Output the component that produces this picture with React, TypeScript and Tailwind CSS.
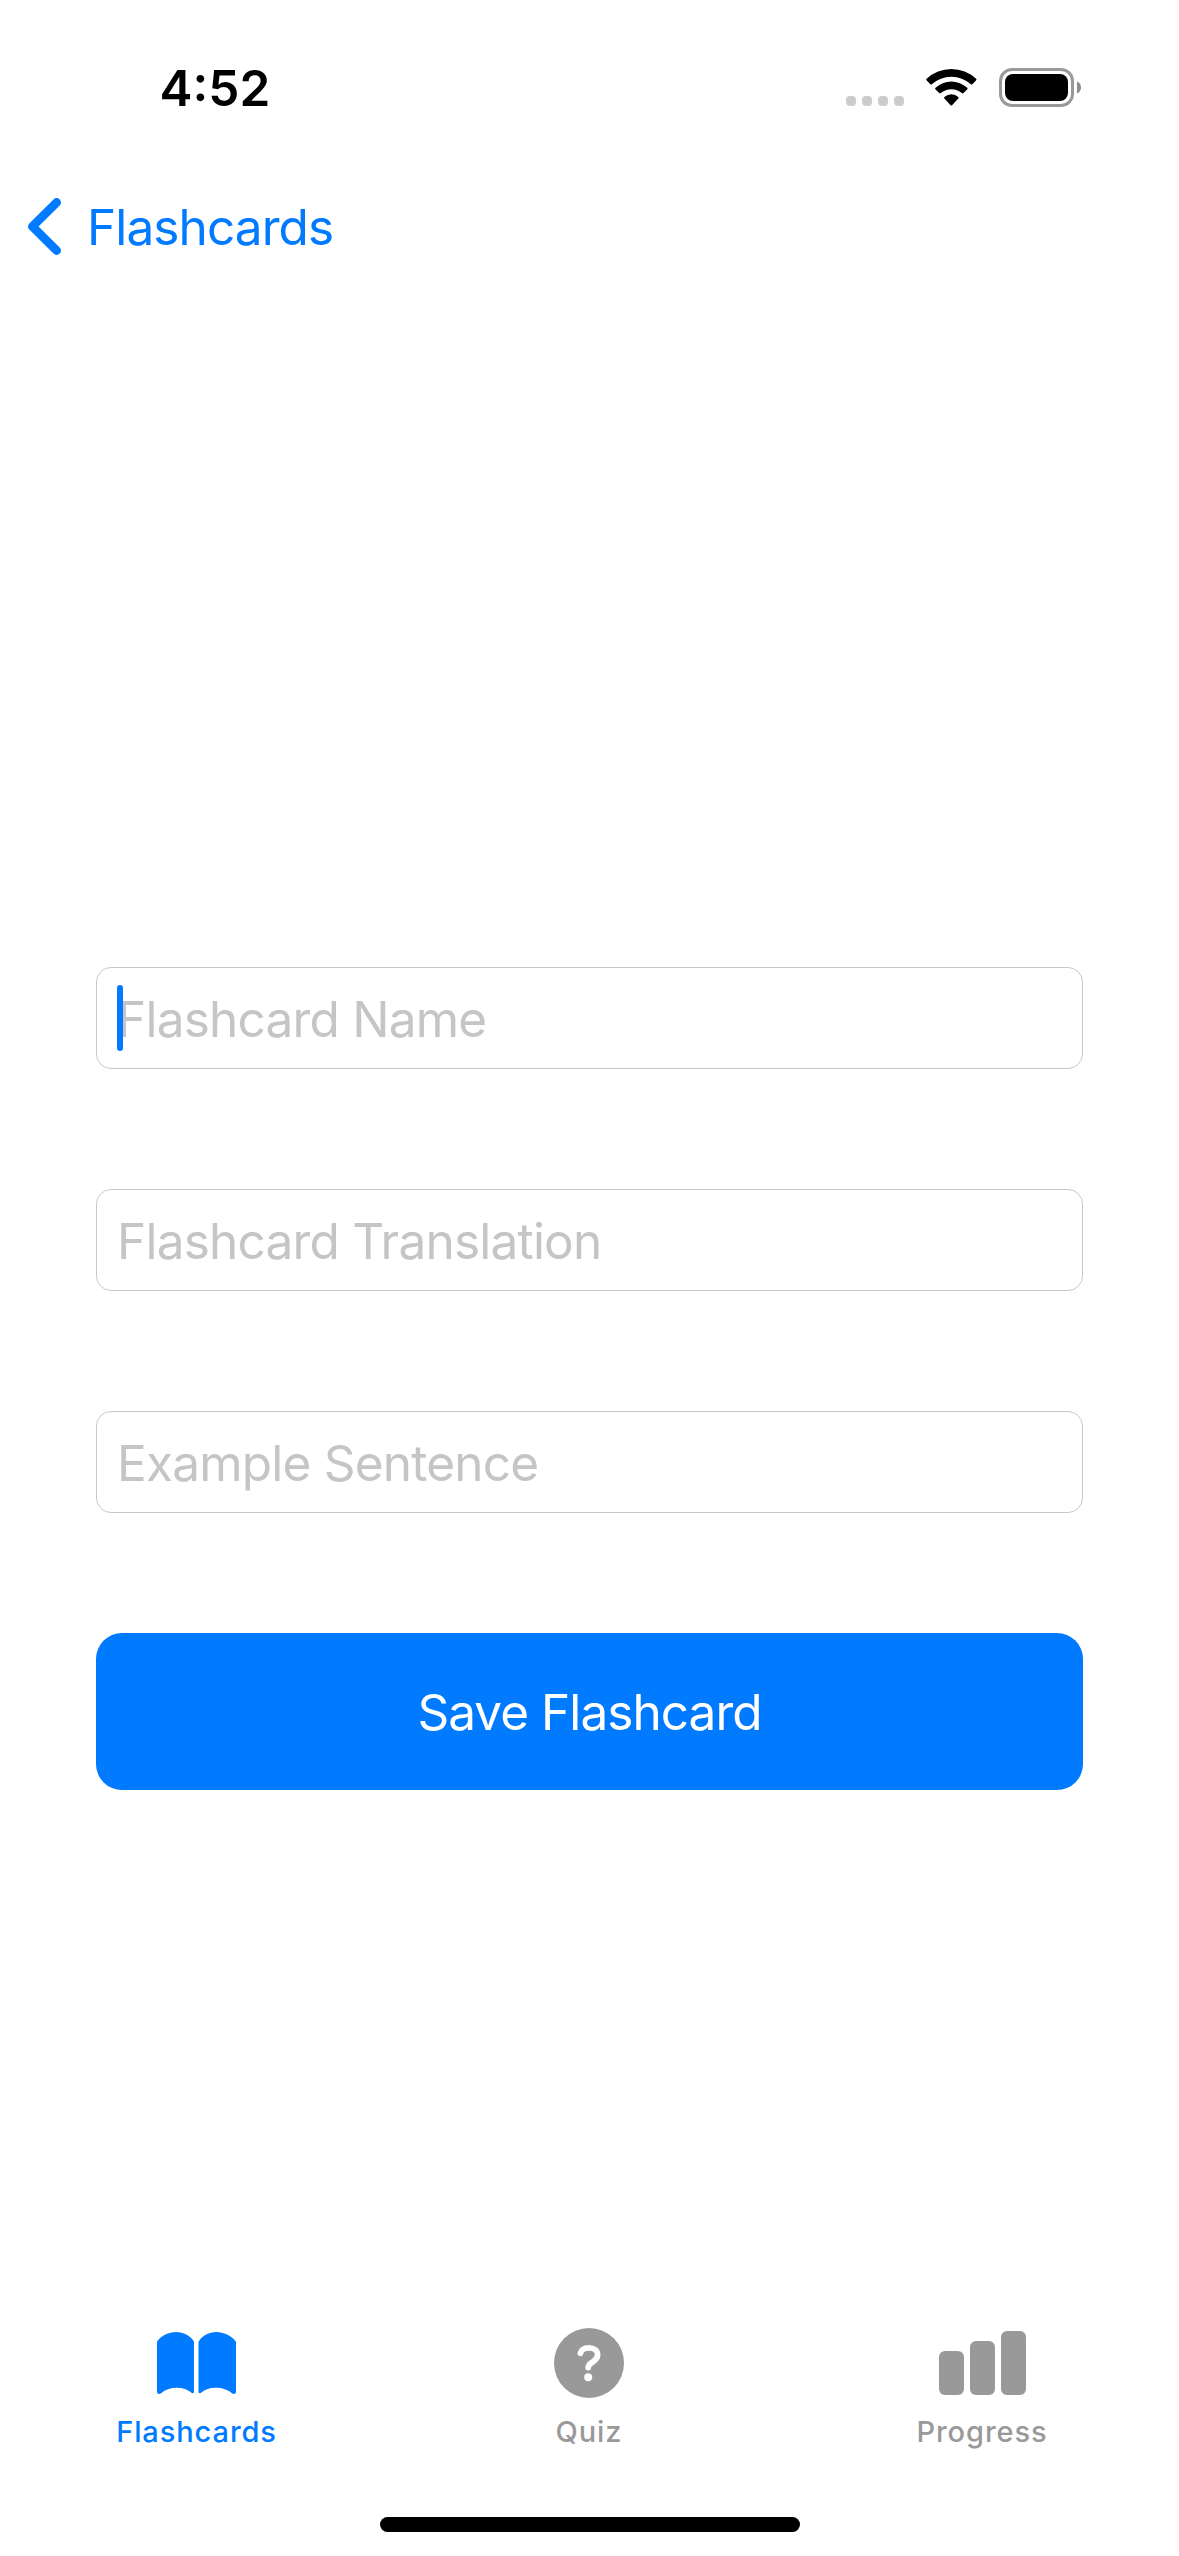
import type { ReactNode } from 'react'

function StatusBar() {
  return (
    <header className="flex h-[169px] items-start justify-between pl-[159.5px] pr-[98px] text-black">
      <span className="mt-[58px] text-[49.5px] leading-[60px] font-semibold">4:52</span>
      <div className="mt-[68px] flex h-[39px] items-start gap-[22px]">
        <div className="mt-7 flex gap-1.5">
          <span className="size-2.5 rounded-[4px] bg-[#cccccc]" />
          <span className="size-2.5 rounded-[4px] bg-[#cccccc]" />
          <span className="size-2.5 rounded-[4px] bg-[#cccccc]" />
          <span className="size-2.5 rounded-[4px] bg-[#cccccc]" />
        </div>
        <svg className="h-[39px] w-[51px]" viewBox="0 0 51 39" fill="currentColor">
          <path d="M.6 10.8A36 36 0 0 1 50.1 10.8Q50.9 11.5 50.2 12.3L46.4 16.2Q45.7 16.9 44.9 16.2A29.5 29.5 0 0 0 5.8 16.2Q5 16.9 4.3 16.2L.5 12.3Q-.2 11.5 .6 10.8Z" />
          <path d="M9.5 19.8A23.2 23.2 0 0 1 41.2 19.8Q42 20.5 41.3 21.3L37.5 25.1Q36.7 25.8 35.9 25.1A16.2 16.2 0 0 0 14.8 25.1Q14 25.8 13.2 25.1L9.4 21.3Q8.7 20.5 9.5 19.8Z" />
          <path d="M18.4 28.9A10.8 10.8 0 0 1 32.3 28.9Q33 29.6 32.3 30.4L26 37.2Q25.3 37.9 24.6 37.2L18.4 30.4Q17.7 29.6 18.4 28.9Z" />
        </svg>
        <svg className="h-[39px] w-[82px]" viewBox="0 0 82 39">
          <rect x="1.5" y="1.5" width="72" height="36" rx="11.5" fill="none" stroke="#999999" strokeWidth="3" />
          <rect x="6" y="6" width="63" height="27" rx="8" fill="#000" />
          <path d="M78 13.5Q82 15.4 82 19.5T78 25.5Z" fill="#8c8c8c" />
        </svg>
      </div>
    </header>
  )
}

function NavBar() {
  return (
    <nav className="flex h-[120px] items-start pl-7 text-[#007aff]">
      <svg className="mt-[29px] h-[57px] w-[33px]" viewBox="0 0 33 57" fill="none" stroke="currentColor" strokeWidth="8.8" strokeLinecap="round" strokeLinejoin="round">
        <path d="M28.6 4.5L4.4 28.5L28.6 52.5" />
      </svg>
      <span className="mt-7 ml-[26px] text-[49.5px] leading-[60px] tracking-[-0.9px]">Flashcards</span>
    </nav>
  )
}

function Field({ children, focused }: { children: ReactNode; focused?: boolean }) {
  return (
    <div className="relative h-[102px] rounded-[15px] border border-[#c8c8c9] pt-[21px] pl-5 text-[49.5px] leading-[60px] tracking-[-0.78px] text-[#c5c5c7]">
      {children}
      {focused && <span className="absolute top-[17px] left-5 h-[66px] w-1.5 rounded-full bg-[#007aff]" />}
    </div>
  )
}

function Tab({ icon, label, active }: { icon: ReactNode; label: string; active?: boolean }) {
  return (
    <div className={active ? 'flex flex-col items-center text-[#007aff]' : 'flex flex-col items-center pr-px text-[#999999]'}>
      {icon}
      <span className="mt-4 text-[29px] leading-[35px] font-medium tracking-[0.9px]">{label}</span>
    </div>
  )
}

const bookIcon = (
  <svg className="h-[70px] w-[79px]" viewBox="0 0 79 70" fill="currentColor">
    <path d="M0 14.5Q0 13.5 .8 12.7C4.5 7.5 11.5 4 19.2 4C26.5 4 33 7.5 36.4 12.7Q37 13.5 37 14.5V63.8Q37 66 34.8 64.9C31 61.5 25.5 59.7 19.7 59.7C13.5 59.7 8 61.7 4.4 64.9Q2.8 66.2 1.2 65.8Q0 65.3 0 63.8Z" />
    <path d="M41.5 14.5Q41.5 13.5 42.2 12.7C45.5 7.5 52 4 59.3 4C67 4 74 7.5 78.2 12.7Q79 13.5 79 14.5V63.8Q79 65.3 77.8 65.8Q76.2 66.2 74.6 64.9C71 61.7 65 59.7 58.8 59.7C53 59.7 47.5 61.5 43.7 64.9Q41.5 66 41.5 63.8Z" />
  </svg>
)

const quizIcon = (
  <svg className="size-[70px]" viewBox="0 0 70 70">
    <circle cx="35" cy="35" r="35" fill="currentColor" />
    <path d="M26.4 25.3C27.3 21.8 30.5 19.8 35 19.8C40 19.8 43.6 22.6 43.6 26.8C43.6 30.3 41.5 32.2 38.7 33.9C35.5 35.8 34.2 37.2 34.2 39.5" fill="none" stroke="#fff" strokeWidth="5.8" strokeLinecap="round" strokeLinejoin="round" />
    <circle cx="34.2" cy="49.3" r="4" fill="#fff" />
  </svg>
)

const progressIcon = (
  <svg className="h-[70px] w-[87px]" viewBox="0 0 87 70" fill="currentColor">
    <rect x="0" y="23" width="25" height="44" rx="6" />
    <rect x="31" y="13" width="25" height="54" rx="6" />
    <rect x="62" y="3" width="25" height="64" rx="6" />
  </svg>
)

export default function App() {
  return (
    <div className="flex h-[2556px] w-[1179px] flex-col bg-white font-[Inter,sans-serif] whitespace-nowrap">
      <StatusBar />
      <NavBar />
      <main className="flex flex-1 flex-col gap-[120px] px-24 pt-[678px]">
        <Field focused>Flashcard Name</Field>
        <Field>Flashcard Translation</Field>
        <Field>Example Sentence</Field>
        <button className="h-[157px] rounded-[26px] bg-[#007aff] pt-[49px] pb-12 text-[49.5px] leading-[60px] tracking-[-0.95px] text-white">
          Save Flashcard
        </button>
      </main>
      <footer className="h-[228px]">
        <div className="grid h-[189px] grid-cols-3">
          <Tab icon={bookIcon} label="Flashcards" active />
          <Tab icon={quizIcon} label="Quiz" />
          <Tab icon={progressIcon} label="Progress" />
        </div>
        <div className="mx-auto h-[15px] w-[420px] rounded-full bg-black" />
      </footer>
    </div>
  )
}
